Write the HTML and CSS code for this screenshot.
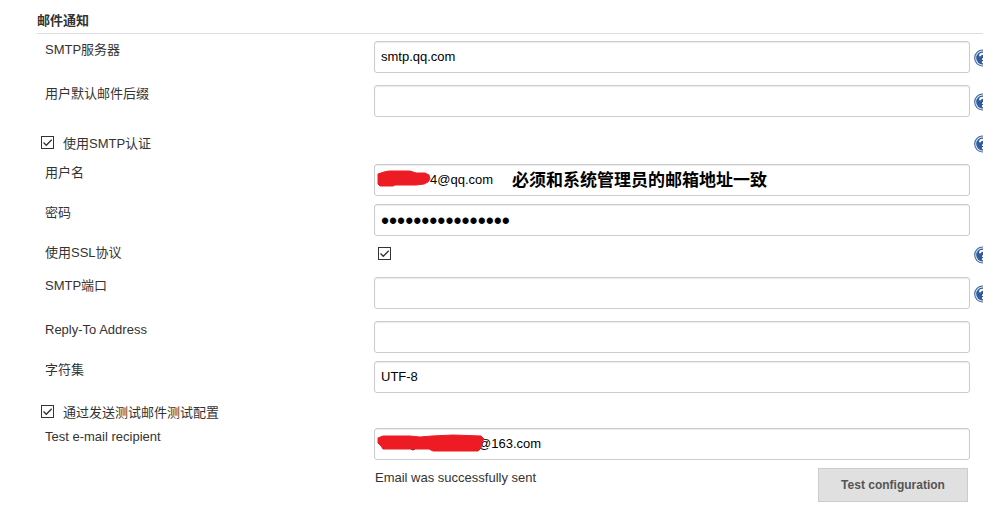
FILE: index.html
```html
<!DOCTYPE html>
<html lang="zh-CN">

<head>
  <meta charset="UTF-8">
  <meta name="viewport" content="width=device-width, initial-scale=1.0">
  <title>邮件通知</title>
  <link rel="stylesheet" href="styles.css">
</head>

<body>
  <!-- help icon, reused by the rows -->
  <svg class="defs" aria-hidden="true">
    <symbol id="help" viewBox="0 0 18 18">
      <circle cx="8.6" cy="9" r="8.5" fill="#3f68a3"/>
      <circle cx="8.6" cy="9" r="7.4" fill="#dfe8f3"/>
      <circle cx="8.6" cy="9" r="6.4" fill="#2f5c9c"/>
      <path d="M6 7.2C6 4 11.4 4 11.4 7.2C11.4 9 8.9 9 8.9 11" fill="none" stroke="#fff" stroke-width="2"/>
      <circle cx="8.9" cy="13.2" r="1.1" fill="#fff"/>
    </symbol>
  </svg>

  <form class="config">
    <h1 class="section-title">邮件通知</h1>

    <div class="row with-help">
      <label class="name" for="smtpServer">SMTP服务器</label>
      <div class="setting"><input class="text" type="text" id="smtpServer" value="smtp.qq.com"></div>
      <a class="help" href="#" aria-label="SMTP服务器"><svg class="help-icon"><use href="#help"/></svg></a>
    </div>
    <div class="row with-help">
      <label class="name" for="suffix">用户默认邮件后缀</label>
      <div class="setting"><input class="text" type="text" id="suffix"></div>
      <a class="help" href="#" aria-label="用户默认邮件后缀"><svg class="help-icon"><use href="#help"/></svg></a>
    </div>

    <div class="check-row tall">
      <input class="check" type="checkbox" id="useAuth" checked>
      <label class="check-label" for="useAuth">使用SMTP认证</label>
      <a class="help" href="#" aria-label="使用SMTP认证"><svg class="help-icon"><use href="#help"/></svg></a>
    </div>

    <div class="row">
      <label class="name" for="user">用户名</label>
      <div class="setting">
        <input class="text masked-user" type="text" id="user" value="4@qq.com">
        <svg class="scribble" width="60" height="20" viewBox="0 0 60 20" aria-hidden="true">
          <path d="M3 6L9 4L14 3L35 3L41 5L50 5L54 7L55 11L53 14L49 16L41 17L20 17L18 18L5 18L3 16Z" fill="#ed1c24" stroke="#ed1c24" stroke-linejoin="round"/>
        </svg>
        <span class="note">必须和系统管理员的邮箱地址一致</span>
      </div>
    </div>
    <div class="row">
      <label class="name" for="password">密码</label>
      <div class="setting"><input class="text password" type="password" id="password" value="abcdefghijklmnop"></div>
    </div>
    <div class="row ssl">
      <label class="name" for="ssl">使用SSL协议</label>
      <div class="setting"><input class="check" type="checkbox" id="ssl" checked></div>
      <a class="help" href="#" aria-label="使用SSL协议"><svg class="help-icon"><use href="#help"/></svg></a>
    </div>
    <div class="row with-help">
      <label class="name" for="port">SMTP端口</label>
      <div class="setting"><input class="text" type="text" id="port"></div>
      <a class="help" href="#" aria-label="SMTP端口"><svg class="help-icon"><use href="#help"/></svg></a>
    </div>
    <div class="row">
      <label class="name" for="replyTo">Reply-To Address</label>
      <div class="setting"><input class="text" type="text" id="replyTo"></div>
    </div>
    <div class="row">
      <label class="name" for="charset">字符集</label>
      <div class="setting"><input class="text" type="text" id="charset" value="UTF-8"></div>
    </div>

    <div class="check-row">
      <input class="check" type="checkbox" id="sendTest" checked>
      <label class="check-label" for="sendTest">通过发送测试邮件测试配置</label>
    </div>

    <div class="row">
      <label class="name" for="recipient">Test e-mail recipient</label>
      <div class="setting">
        <input class="text masked-recipient" type="text" id="recipient" value="@163.com">
        <svg class="scribble" width="112" height="26" viewBox="0 0 112 26" aria-hidden="true">
          <path d="M36 17Q38 19 40 17" fill="none" stroke="#111" stroke-width="1"/>
          <path d="M3 6L8 4L35 4L45 5L57 4L78 3L106 4L109 7L107 10L106 16L103 19L58 19L54 17L8 17L6 14L3 11Z" fill="#ed1c24" stroke="#ed1c24" stroke-linejoin="round"/>
        </svg>
      </div>
    </div>
    <div class="row">
      <div class="setting result">
        <span class="message">Email was successfully sent</span>
        <button class="test-button" type="button">Test configuration</button>
      </div>
    </div>
  </form>
</body>

</html>
```
FILE: styles.css
```css
body {
  margin: 0;
  background-color: #fff;
  color: #333;
  font-family: "Liberation Sans", "Noto Sans CJK SC", sans-serif;
  font-size: 13px;
  line-height: 18px;
}

.defs {
  display: none;
}

.config {
  padding: 12px 0 0 37px;
}

.section-title {
  margin: 0 0 7px;
  padding-bottom: 3px;
  border-bottom: 1px solid #ddd;
  font-size: 13px;
  font-weight: bold;
}

.row {
  display: grid;
  grid-template-columns: 329px 1fr 9px;
  column-gap: 4px;
  min-height: 40px;
  padding-left: 4px;
}

.row.with-help {
  min-height: 44px;
}

.row.ssl {
  min-height: 33px;
}

.name {
  padding-left: 4px;
}

.setting {
  position: relative;
}

.text {
  display: block;
  box-sizing: border-box;
  width: 100%;
  height: 32px;
  padding: 0 6px 1px;
  border: 1px solid #ccc;
  border-radius: 3px;
  box-shadow: inset 0 1px 1px rgba(0, 0, 0, 0.08);
  background-color: #fff;
  color: #000;
  font-family: inherit;
  font-size: 13px;
}

.password {
  padding-top: 2px;
  padding-bottom: 0;
  font-size: 23px;
}

.masked-user {
  padding-left: 55px;
}

.masked-recipient {
  padding-left: 103px;
}

.scribble {
  position: absolute;
  top: 4px;
  left: 1px;
}

.note {
  position: absolute;
  top: 5px;
  left: 138px;
  color: #000;
  font-size: 17px;
  font-weight: bold;
  line-height: 24px;
}

.help {
  display: block;
  overflow: hidden;
  width: 9px;
  height: 18px;
}

.with-help .help {
  margin-top: 8px;
}

.ssl .help {
  margin-top: 2px;
}

.help-icon {
  display: block;
  width: 18px;
  height: 18px;
}

.check {
  appearance: none;
  display: block;
  flex: none;
  width: 13px;
  height: 13px;
  margin: 0;
  border: 1px solid #333;
  background: #fff url("data:image/svg+xml,%3Csvg xmlns='http://www.w3.org/2000/svg' viewBox='0 0 11 11'%3E%3Cpath d='M1.5 5.5L4.3 8.3L9.7 2.7' fill='none' stroke='%23333' stroke-width='1.3'/%3E%3C/svg%3E") center / 11px 11px no-repeat;
}

.ssl .check {
  margin: 3px 0 0 4px;
}

.check-row {
  display: flex;
  align-items: flex-start;
  height: 24px;
  padding: 3px 0 0 4px;
}

.check-row.tall {
  height: 29px;
  padding-top: 6px;
}

.check-row .check {
  margin-top: 1px;
}

.check-label {
  flex: 1;
  padding-left: 9px;
}

.result {
  grid-column: 2;
  display: flex;
  justify-content: space-between;
  align-items: flex-start;
  padding-right: 2px;
}

.message {
  padding: 1px 0 0 1px;
}

.test-button {
  width: 150px;
  height: 34px;
  border: 1px solid #ccc;
  background-color: #e0e0e0;
  color: #555;
  font-family: inherit;
  font-size: 12px;
  font-weight: bold;
}
```
